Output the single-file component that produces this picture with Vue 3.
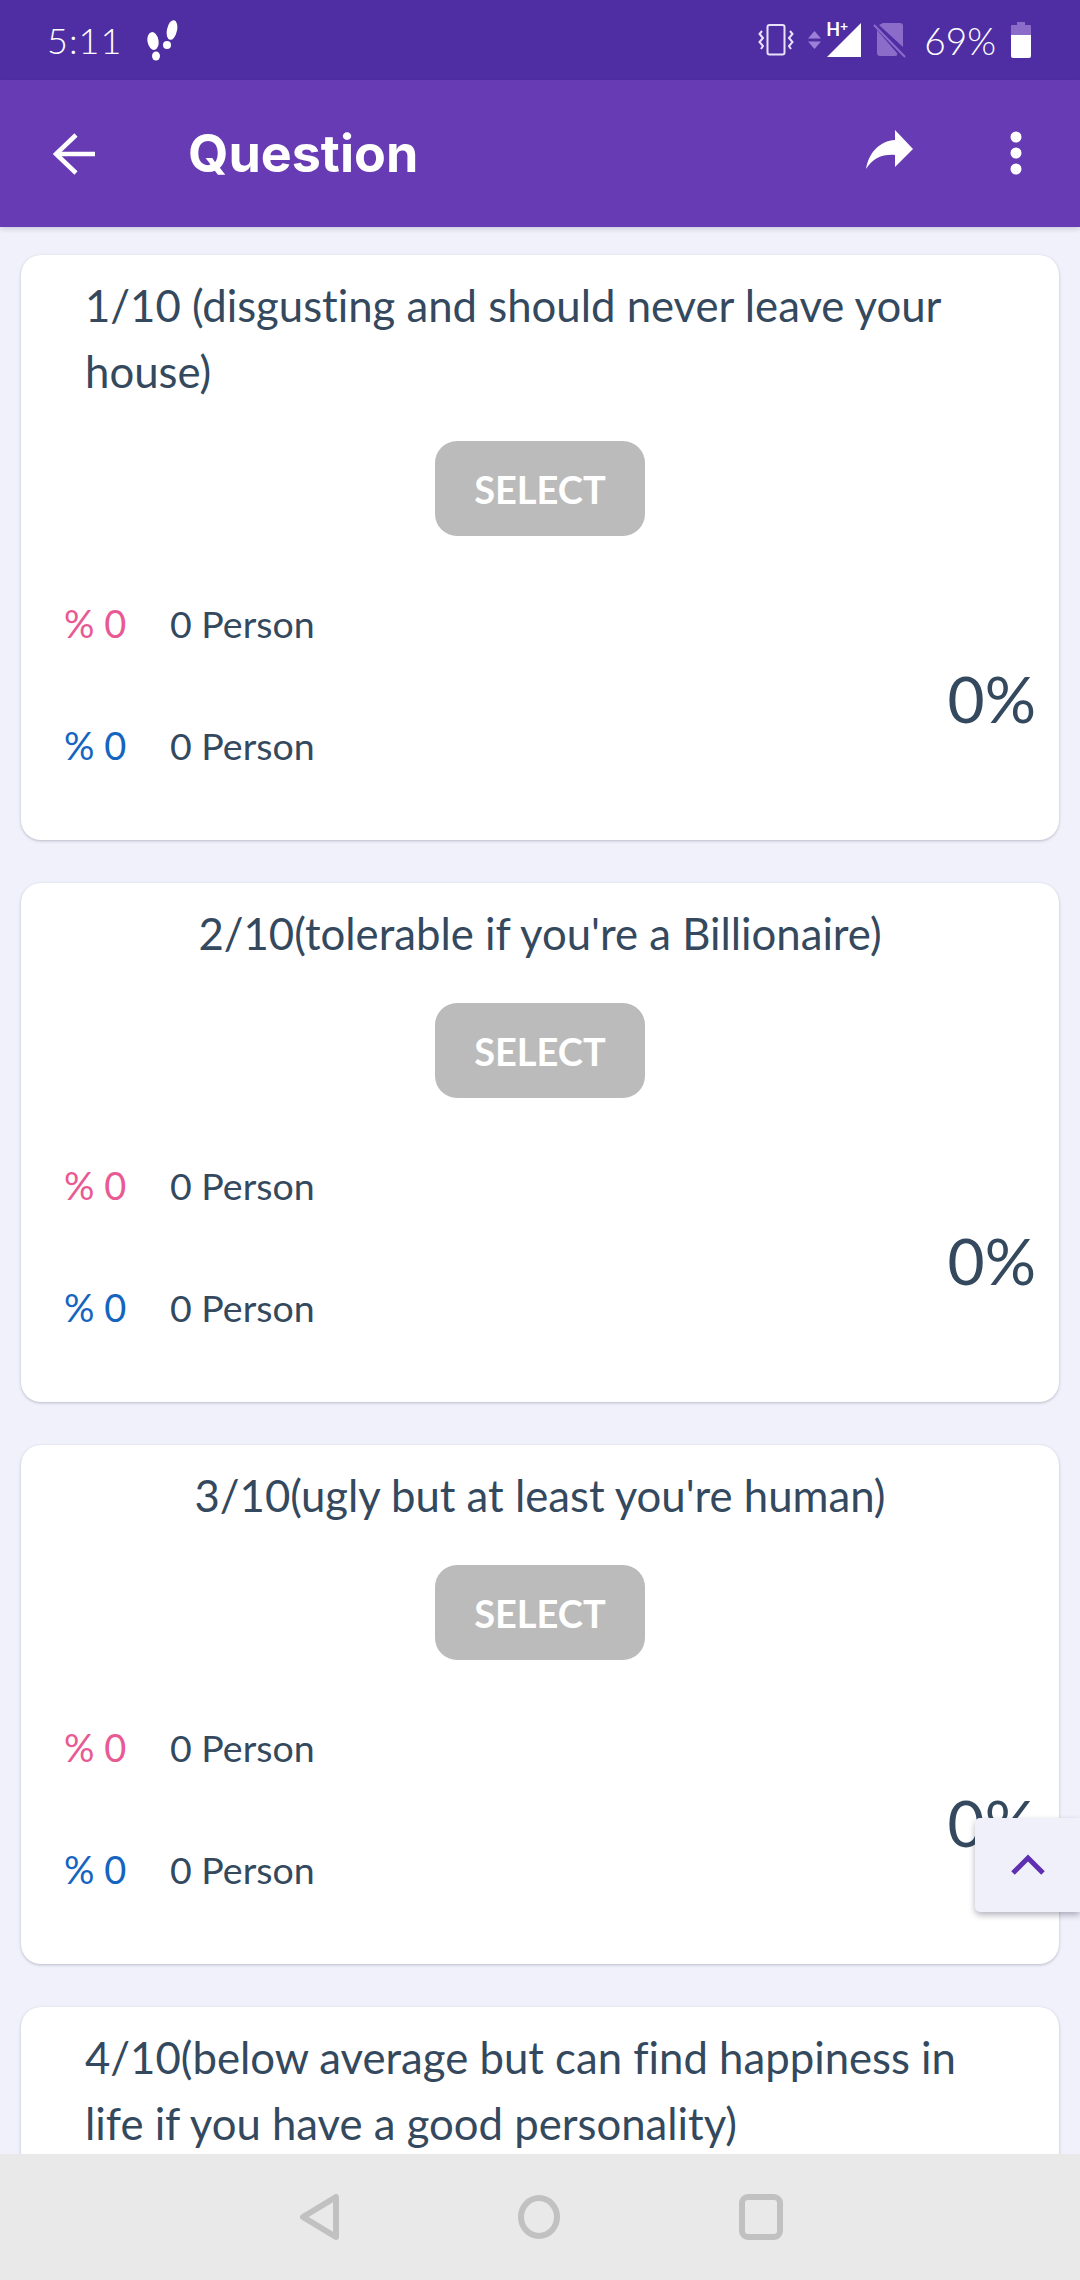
<script setup>
const cards = [
  { id: 1, title: '1/10 (disgusting and should never leave your house)', left: true, full: true },
  { id: 2, title: "2/10(tolerable if you're a Billionaire)", left: false, full: true },
  { id: 3, title: "3/10(ugly but at least you're human)", left: false, full: true },
  { id: 4, title: '4/10(below average but can find happiness in life if you have a good personality)', left: true, full: false }
]
</script>

<template>
  <div class="phone">
    <header class="status">
      <span class="time">5:11</span>
      <svg class="steps" width="32" height="41" viewBox="0 0 32 41">
        <g fill="#fff">
          <ellipse cx="6" cy="21" rx="5.500" ry="9" transform="rotate(-10 6 21)" />
          <ellipse cx="9" cy="36" rx="4" ry="4.500" />
          <ellipse cx="25" cy="10" rx="5" ry="10" transform="rotate(12 25 10)" />
          <ellipse cx="20" cy="25" rx="4" ry="4" />
        </g>
      </svg>
      <span class="grow"></span>
      <svg class="vib" width="36" height="34" viewBox="0 0 36 34" fill="none" stroke="#e9e2f8" stroke-width="2">
        <rect x="9.500" y="2" width="17" height="29.500" rx="2" />
        <path d="M4 8 L1.500 11 L5 15 L1.500 19 L5 23 L3 26" />
        <path d="M32 8 L34.500 11 L31 15 L34.500 19 L31 23 L33 26" />
      </svg>
      <svg class="updown" width="13" height="18" viewBox="0 0 13 18" fill="#9c7fd6">
        <path d="M6.500 0 L13 7.500 H0 Z" />
        <path d="M6.500 18 L13 10.500 H0 Z" />
      </svg>
      <div class="signal">
        <svg width="36" height="36" viewBox="0 0 36 36">
          <path d="M35 1 V35 H1 Z" fill="#fff" />
        </svg>
        <span class="hplus">H<sup>+</sup></span>
      </div>
      <svg class="sim" width="33" height="36" viewBox="0 0 33 36">
        <path d="M10 1 H27 Q30 1 30 4 V25 L6 3 Z M4 8 L24 31 Q25 34 22 34 H7 Q4 34 4 31 Z" fill="#8b6cc9" />
        <path d="M1 3 L32 35" stroke="#8b6cc9" stroke-width="2" />
      </svg>
      <span class="pct">69%</span>
      <svg class="batt" width="20" height="36" viewBox="0 0 20 36">
        <path d="M6 0 H14 V3 H19 Q20 3 20 4 V14 H0 V4 Q0 3 1 3 H6 Z" fill="#8b6cc9" />
        <path d="M0 13 H20 V34 Q20 36 18 36 H2 Q0 36 0 34 Z" fill="#fff" />
      </svg>
    </header>

    <nav class="toolbar">
      <svg class="back" width="42" height="42" viewBox="0 0 42 42" fill="none" stroke="#fff" stroke-width="4.500">
        <path d="M42 21 H3" />
        <path d="M23 2 L3 21 L23 40" />
      </svg>
      <h1 class="heading">Question</h1>
      <span class="grow"></span>
      <svg class="share" width="48" height="40" viewBox="0 0 48 40">
        <path d="M29 0 L47 19 L29 37 V25 C17 24 7 28 0 39 C3 22 14 11 29 10 Z" fill="#fff" />
      </svg>
      <svg class="dots" width="12" height="44" viewBox="0 0 12 44" fill="#fff">
        <circle cx="6" cy="6" r="5.500" />
        <circle cx="6" cy="22" r="5.500" />
        <circle cx="6" cy="38" r="5.500" />
      </svg>
    </nav>

    <main class="list">
      <section v-for="c in cards" :key="c.id" class="card" :class="{ cut: !c.full }">
        <p class="title" :class="{ left: c.left }">{{ c.title }}</p>
        <template v-if="c.full">
          <div class="btn-wrap"><button class="select">SELECT</button></div>
          <div class="stats">
            <div class="rows">
              <div class="row"><span class="p pink">% 0</span><span class="n">0 Person</span></div>
              <div class="row"><span class="p blue">% 0</span><span class="n">0 Person</span></div>
            </div>
            <span class="total">0%</span>
          </div>
        </template>
      </section>
    </main>

    <footer class="nav">
      <svg width="42" height="48" viewBox="0 0 42 48" fill="none" stroke="#c1c1c1" stroke-width="6" stroke-linejoin="round">
        <path d="M38 4 V44 L5 24 Z" />
      </svg>
      <svg width="44" height="46" viewBox="0 0 44 46" fill="none" stroke="#c1c1c1" stroke-width="6">
        <ellipse cx="22" cy="23" rx="18" ry="19" />
      </svg>
      <svg width="44" height="46" viewBox="0 0 44 46" fill="none" stroke="#c1c1c1" stroke-width="6">
        <rect x="3" y="3" width="38" height="40" rx="6" />
      </svg>
    </footer>

    <button class="fab" aria-label="up">
      <svg width="34" height="22" viewBox="0 0 34 22" fill="none" stroke="#5e2fb0" stroke-width="5">
        <path d="M2 19 L17 4 L32 19" />
      </svg>
    </button>
  </div>
</template>

<style scoped>
.phone {
  position: relative;
  width: 1080px;
  height: 2280px;
  overflow: hidden;
  display: flex;
  flex-direction: column;
  background: #f0f1fa;
  font-family: Lato, "Noto Sans", sans-serif;
  font-variant-ligatures: none;
  color: #34495e;
}
.grow { flex: 1; }
.status {
  height: 80px;
  flex: none;
  background: #4f2ea3;
  display: flex;
  align-items: center;
  padding: 0 49px 0 47px;
  color: #fff;
}
.time { font-size: 36px; font-weight: 300; letter-spacing: 1px; }
.steps { margin-left: 25px; margin-top: 1px; }
.vib { margin-top: -1px; }
.updown { margin-left: 14px; }
.signal { position: relative; width: 36px; height: 36px; margin-left: 5px; margin-top: -1px; }
.signal svg { display: block; }
.hplus {
  position: absolute;
  left: 0;
  top: -2px;
  font-size: 18px;
  font-weight: 700;
  line-height: 18px;
  color: #fff;
  white-space: nowrap;
}
.hplus sup { font-size: 14px; line-height: 0; vertical-align: 5px; }
.sim { margin-left: 11px; margin-top: -1px; }
.pct { font-size: 37px; font-weight: 300; margin-left: 18px; }
.batt { margin-left: 15px; margin-top: -1px; }
.toolbar {
  height: 147px;
  flex: none;
  background: #673bb3;
  display: flex;
  align-items: center;
  padding: 0 58px 0 53px;
  box-shadow: 0 2px 5px rgba(40, 30, 90, .18);
  position: relative;
  z-index: 1;
}
.heading {
  margin: 0 0 0 93px;
  font-family: Inter, sans-serif;
  font-size: 52px;
  font-weight: 700;
  color: #fff;
}
.share { margin-right: 96px; margin-top: -8px; }
.dots { margin-top: -1px; }
.list {
  flex: 1;
  min-height: 0;
  overflow: hidden;
  padding: 28px 21px 0;
  display: flex;
  flex-direction: column;
  gap: 43px;
}
.card {
  flex: none;
  background: #fff;
  border-radius: 20px;
  box-shadow: 0 1px 3px rgba(60, 60, 90, .3);
  padding: 17px 0 34px;
}
.card.cut { flex: 1; padding-bottom: 0; border-radius: 20px 20px 0 0; }
.title {
  margin: 0;
  padding: 0 60px;
  font-size: 43.700px;
  line-height: 66px;
  text-align: center;
}
.title.left { text-align: left; padding-left: 64px; }
.btn-wrap { display: flex; justify-content: center; margin-top: 37px; }
.select {
  width: 210px;
  height: 95px;
  border: 0;
  border-radius: 22px;
  background: #bbb;
  color: #fff;
  font: 700 38px Lato, sans-serif;
}
.stats {
  display: flex;
  align-items: center;
  justify-content: space-between;
  padding: 0 23px 0 43px;
  margin-top: 26px;
}
.rows { display: flex; flex-direction: column; }
.row { height: 122px; display: flex; align-items: center; font-size: 37.500px; }
.p { width: 106px; font-size: 38px; font-weight: 400; }
.pink { color: #e85a93; }
.blue { color: #1565c0; }
.total { font-size: 64px; font-weight: 400; margin-top: 28px; }
.nav {
  height: 126px;
  flex: none;
  background: #e9e9e9;
  display: flex;
  align-items: center;
  justify-content: center;
  gap: 177.500px;
  position: relative;
  z-index: 1;
}
.fab {
  position: absolute;
  right: 0;
  top: 1818px;
  width: 105px;
  height: 94px;
  border: 0;
  padding: 0;
  background: #f0f0fa;
  border-radius: 5px 0 0 5px;
  box-shadow: 0 3px 6px rgba(40, 40, 70, .35);
  display: flex;
  align-items: center;
  justify-content: center;
}
</style>
